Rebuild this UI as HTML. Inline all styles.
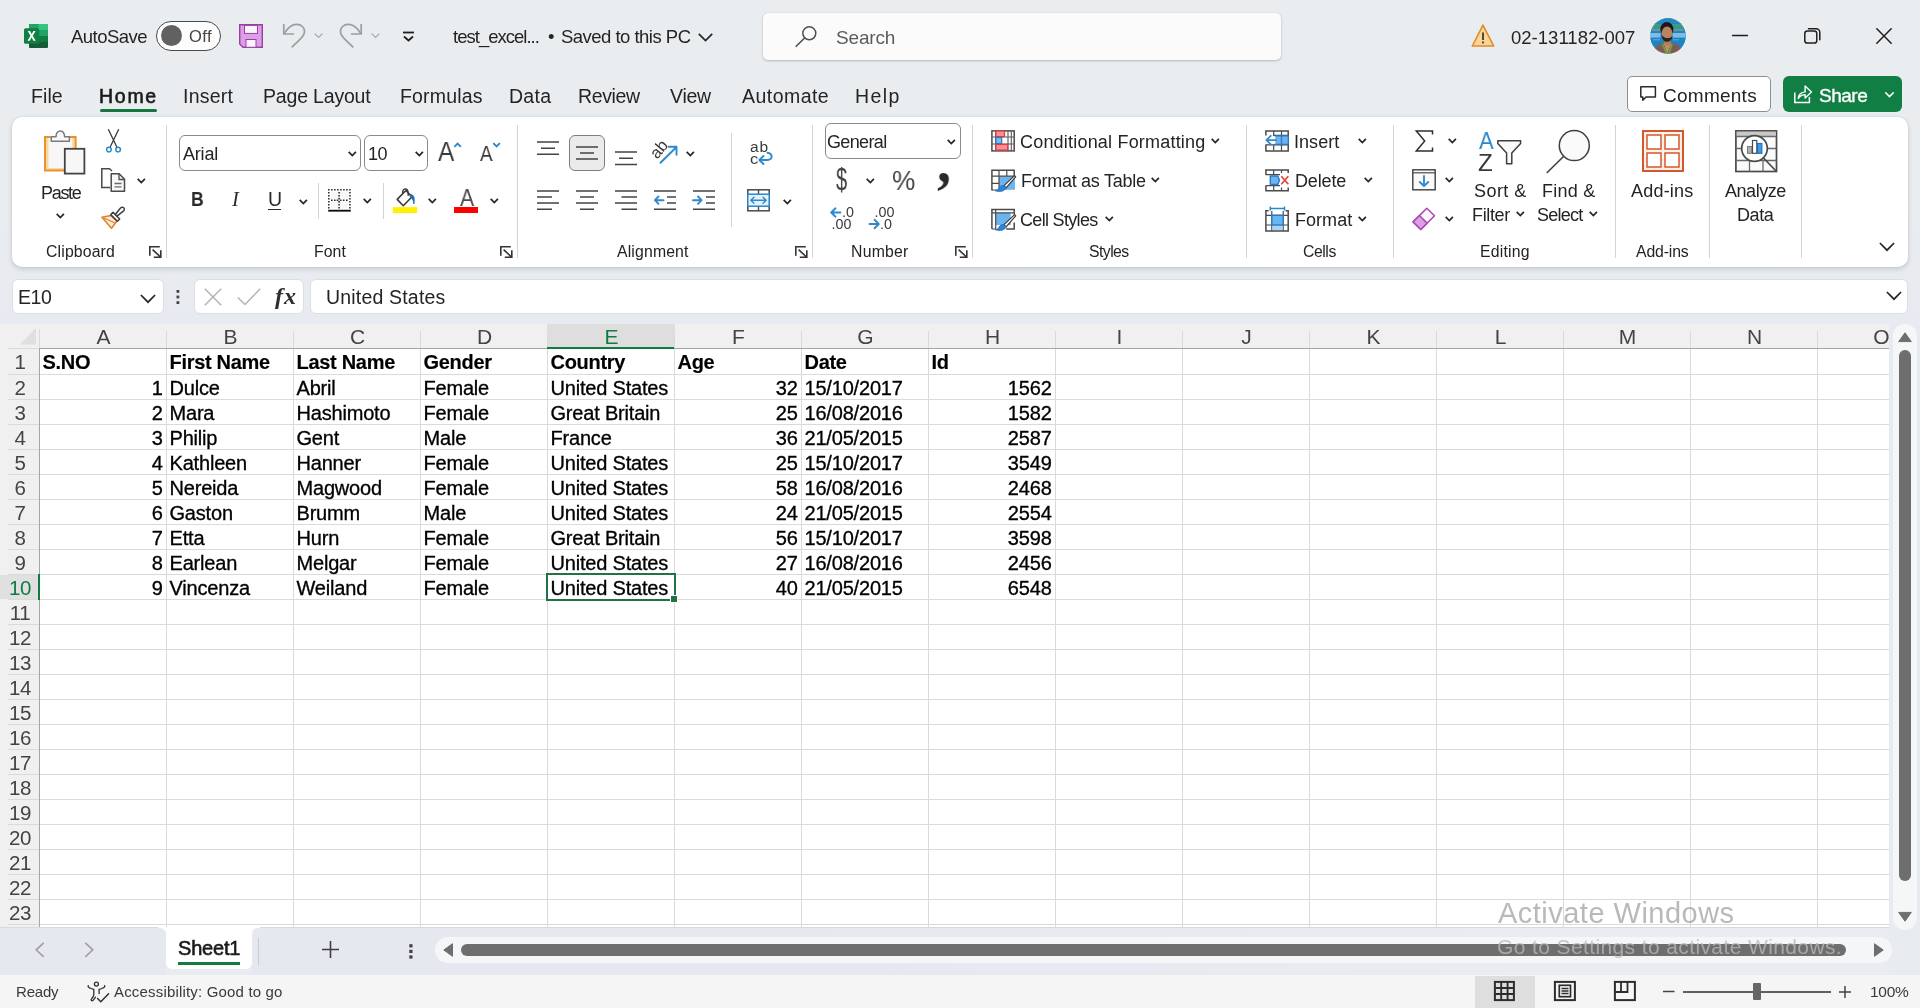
<!DOCTYPE html>
<html lang="en">
<head>
<meta charset="utf-8">
<title>test_excel - Excel</title>
<style>
*{box-sizing:border-box;margin:0;padding:0}
html,body{width:1920px;height:1008px;overflow:hidden;background:#e9edf0}
body{background:linear-gradient(to bottom,#e9edf0 0,#e9edf0 200px,#e7eaf0 330px,#e7eaf0 900px,#e9ecf0 100%)}
body{font-family:"Liberation Sans",sans-serif;color:#242424;position:relative}
.t{position:absolute;white-space:pre;line-height:1;will-change:transform}
.t.c,.t.k{will-change:auto}
.abs{position:absolute}
svg{position:absolute;overflow:visible}
.sep{position:absolute;width:1px;background:#d4d4d4}
.chev{fill:none;stroke:#262626;stroke-width:1.75;stroke-linecap:butt;stroke-linejoin:miter}
.dl{fill:none;stroke:#333;stroke-width:1.6}
.ln{stroke:#444;stroke-width:1.5;fill:none}
.bl{stroke:#2e8aca;stroke-width:1.9;fill:none;stroke-linecap:round;stroke-linejoin:round}
.c{font-size:20px;letter-spacing:-.19px;color:#000;-webkit-text-stroke:.32px #000}
.semi2{-webkit-text-stroke:.35px currentColor}
.semi{-webkit-text-stroke:.6px currentColor}
</style>
</head>
<body>

<!-- ================= TITLE BAR ================= -->
<div id="titlebar" class="abs" style="left:0;top:0;width:1920px;height:72px">
<!-- Excel logo -->
<svg style="left:24px;top:24px" width="24" height="24" viewBox="0 0 24 24">
  <rect x="5" y="0" width="19" height="24" rx="1.6" fill="#21a366"/>
  <rect x="5" y="0" width="9.5" height="6" fill="#21a366"/>
  <rect x="14.5" y="0" width="9.5" height="6" rx="1" fill="#33c481"/>
  <rect x="5" y="6" width="9.5" height="6" fill="#107c41"/>
  <rect x="14.5" y="6" width="9.5" height="6" fill="#21a366"/>
  <rect x="5" y="12" width="9.5" height="6" fill="#0e6a37"/>
  <rect x="14.5" y="12" width="9.5" height="6" fill="#107c41"/>
  <path d="M5 18h19v4.4a1.6 1.6 0 0 1-1.6 1.6H6.6A1.6 1.6 0 0 1 5 22.400z" fill="#185c37"/>
  <rect x="0" y="4.300" width="15.200" height="15.500" rx="1.600" fill="#117e43"/>
  <path d="M3.700 7h2.400l1.600 3.300L9.400 7h2.200l-2.800 4.800 2.900 4.900H9.300l-1.700-3.500-1.800 3.500H3.500l3-4.900z" fill="#fff"/>
</svg>
<span class="t" style="left:71.20px;top:28px;font-size:18.5px;letter-spacing:-0.543px">AutoSave</span>
<!-- toggle -->
<div class="abs" style="left:156px;top:21px;width:65px;height:30px;border:1.3px solid #4a4a4a;border-radius:15px;background:#fdfdfd"></div>
<div class="abs" style="left:161px;top:25px;width:21px;height:21px;border-radius:50%;background:#616161"></div>
<span class="t" style="left:188.60px;top:28px;font-size:16.5px;letter-spacing:0.400px;color:#444">Off</span>
<!-- save -->
<svg style="left:239px;top:24px" width="24" height="24" viewBox="0 0 24 24">
  <path d="M.7.7h22.600v22.600H4L.7 20z" fill="#dc9fe3" stroke="#9b3ea6" stroke-width="1.400"/>
  <rect x="5.500" y="1.400" width="13" height="8" fill="#fbf3fc" stroke="#9b3ea6" stroke-width="1"/>
  <rect x="7" y="15.500" width="10" height="7.800" fill="#fbf3fc" stroke="#9b3ea6" stroke-width="1"/>
</svg>
<!-- undo -->
<svg style="left:282px;top:23px" width="24" height="26" viewBox="0 0 24 26">
  <path d="M1.800 1.100V11h10.200" fill="none" stroke="#9c9e9f" stroke-width="1.700"/>
  <path d="M2.200 10.600C5.500 5 10 1.400 14.700 1.400c4.800 0 7.800 3.200 7.800 7.200 0 3.400-2 5.400-4.500 7.700l-8.300 8" fill="none" stroke="#9c9e9f" stroke-width="1.700"/>
</svg>
<svg style="left:314px;top:33px" width="9" height="5" viewBox="0 0 9 5"><path d="M.6.600l3.900 3.800L8.400.600" fill="none" stroke="#a8a8a8" stroke-width="1.300"/></svg>
<!-- redo -->
<svg style="left:339px;top:23px" width="24" height="26" viewBox="0 0 24 26">
  <path d="M22.200 1.100V11H12" fill="none" stroke="#9c9e9f" stroke-width="1.700"/>
  <path d="M21.800 10.600C18.500 5 14 1.400 9.300 1.400c-4.800 0-7.800 3.200-7.800 7.200 0 3.400 2 5.400 4.500 7.700l8.300 8" fill="none" stroke="#9c9e9f" stroke-width="1.700"/>
</svg>
<svg style="left:371px;top:33px" width="9" height="5" viewBox="0 0 9 5"><path d="M.6.600l3.900 3.800L8.400.600" fill="none" stroke="#a8a8a8" stroke-width="1.300"/></svg>
<!-- customize QAT -->
<svg style="left:403px;top:31px" width="11" height="11" viewBox="0 0 11 11">
  <path d="M0 1.500h11" stroke="#1f1f1f" stroke-width="1.800"/>
  <path d="M1 5.500l4.500 4L10 5.500" fill="none" stroke="#1f1f1f" stroke-width="1.700"/>
</svg>
<span class="t" style="left:452.70px;top:28px;font-size:18.5px;letter-spacing:-0.983px">test_excel...</span>
<span class="t" style="left:548.20px;top:28px;font-size:18.5px">•</span>
<span class="t" style="left:561.40px;top:28px;font-size:18.5px;letter-spacing:-0.520px">Saved to this PC</span>
<svg style="left:698px;top:33px" width="15" height="9" viewBox="0 0 15 9"><path d="M.8.800l6.700 6.800L14.200.800" class="chev" style="stroke-width:1.700"/></svg>
<!-- search -->
<div class="abs" style="left:763px;top:12.500px;width:517.500px;height:47px;background:#fbfbfb;border-radius:5px;box-shadow:0 1px 2.500px rgba(0,0,0,.22),0 0 1px rgba(0,0,0,.12)"></div>
<svg style="left:795px;top:25px" width="23" height="23" viewBox="0 0 23 23">
  <circle cx="14.300" cy="8.300" r="6.500" fill="none" stroke="#4f4f4f" stroke-width="1.500"/>
  <path d="M9.600 13L1.200 21.300" stroke="#4f4f4f" stroke-width="1.600" stroke-linecap="round"/>
</svg>
<span class="t" style="left:836.40px;top:28px;font-size:19px;letter-spacing:-0.160px;color:#5c5c5c">Search</span>
<!-- warning -->
<svg style="left:1471px;top:23px" width="24" height="25" viewBox="0 0 24 25">
  <path d="M12 2.200L22.700 23H1.300z" fill="#fbd591" stroke="#e08a2c" stroke-width="1.600" stroke-linejoin="round"/>
  <path d="M12 9.500v7.500" stroke="#3a3a3a" stroke-width="1.800"/>
  <rect x="11.100" y="18.500" width="1.800" height="1.900" fill="#3a3a3a"/>
</svg>
<span class="t" style="left:1510.90px;top:29px;font-size:18.5px;letter-spacing:0.017px">02-131182-007</span>
<!-- avatar -->
<svg style="left:1650px;top:18px" width="36" height="36" viewBox="0 0 36 36">
  <defs><clipPath id="av"><circle cx="18" cy="18" r="17.900"/></clipPath><filter id="avb" x="-10%" y="-10%" width="120%" height="120%"><feGaussianBlur stdDeviation=".55"/></filter></defs>
  <g clip-path="url(#av)"><g filter="url(#avb)">
    <rect x="-2" y="-2" width="40" height="40" fill="#1f84c3"/>
    <rect x="-2" y="-2" width="40" height="7" fill="#2588c0"/>
    <rect x="1" y="5.800" width="10" height="4" fill="#3a9c84"/>
    <rect x="22" y="5.800" width="12" height="4" fill="#3a9c84"/>
    <rect x="2" y="10.500" width="9" height="2.600" fill="#9fb45a" opacity=".5"/>
    <rect x="22.500" y="10.500" width="11" height="2.600" fill="#9fb45a" opacity=".5"/>
    <rect x="0" y="15" width="10.500" height="4.600" fill="#8fc6e6" opacity=".85"/>
    <rect x="22.500" y="15" width="13" height="4.600" fill="#8fc6e6" opacity=".85"/>
    <rect x="3" y="21.300" width="7" height="1" fill="#8fc6e6" opacity=".6"/>
    <rect x="23" y="21.300" width="6" height="1" fill="#8fc6e6" opacity=".6"/>
    <path d="M3.500 37c0-7 3.500-10.800 9.500-12l3.500-.8h3.500l4.500 1.300c5 1.500 8 5 8.500 11.500z" fill="#7d5b58"/>
    <path d="M13.500 24.800l3.800 10.500 4.200-10z" fill="#c48e62"/>
    <path d="M12.300 26l4.600 10M22.100 26l-3.300 10" stroke="#6aa540" stroke-width="1.700" fill="none"/>
    <path d="M14.800 20h5.800v6.200l-2.900 1.600-2.900-1.600z" fill="#b27d58"/>
    <ellipse cx="16.900" cy="11.200" rx="6.500" ry="7.100" fill="#20181a"/>
    <ellipse cx="17" cy="15.300" rx="5.300" ry="6.800" fill="#b8835f"/>
    <path d="M11.500 16.500c.3 4.600 2.400 7.300 5.500 7.300 3.200 0 5.200-2.300 5.500-6-1.100 1.700-2.600 2.300-4.800 2.300-2.600 0-4.600-1-6.200-3.600z" fill="#33221c"/>
  </g></g>
</svg>
<!-- window controls -->
<svg style="left:1732px;top:34px" width="16" height="3" viewBox="0 0 16 3"><path d="M.5 1.500h15" stroke="#1f1f1f" stroke-width="1.500" stroke-linecap="round"/></svg>
<svg style="left:1804px;top:27px" width="17" height="17" viewBox="0 0 17 17">
  <rect x=".8" y="4" width="12" height="12" rx="2.600" fill="none" stroke="#1f1f1f" stroke-width="1.500"/>
  <path d="M4.500 1.700h7.700a3.600 3.600 0 0 1 3.600 3.600v7.500" fill="none" stroke="#1f1f1f" stroke-width="1.500" stroke-linecap="round"/>
</svg>
<svg style="left:1876px;top:28px" width="16" height="16" viewBox="0 0 16 16"><path d="M.8.800l14.400 14.400M15.200.800L.8 15.200" stroke="#1f1f1f" stroke-width="1.500" stroke-linecap="round"/></svg>
</div>

<!-- ================= TABS ================= -->
<span class="t" style="left:31.20px;top:87px;font-size:19.5px;letter-spacing:0.067px">File</span>
<span class="t semi" style="left:98.70px;top:87px;font-size:19.5px;letter-spacing:1.733px;color:#1a1a1a">Home</span>
<div class="abs" style="left:100px;top:108.800px;width:57px;height:3.100px;border-radius:1.600px;background:#15763f"></div>
<span class="t" style="left:183.20px;top:87px;font-size:19.5px;letter-spacing:0.240px">Insert</span>
<span class="t" style="left:262.90px;top:87px;font-size:19.5px;letter-spacing:-0.180px">Page Layout</span>
<span class="t" style="left:400.20px;top:87px;font-size:19.5px;letter-spacing:0.171px">Formulas</span>
<span class="t" style="left:509.10px;top:87px;font-size:19.5px;letter-spacing:0.267px">Data</span>
<span class="t" style="left:577.90px;top:87px;font-size:19.5px;letter-spacing:-0.360px">Review</span>
<span class="t" style="left:670.40px;top:87px;font-size:19.5px;letter-spacing:-0.267px">View</span>
<span class="t" style="left:741.90px;top:87px;font-size:19.5px;letter-spacing:0.457px">Automate</span>
<span class="t" style="left:855.40px;top:87px;font-size:19.5px;letter-spacing:1.400px">Help</span>
<!-- comments / share -->
<div class="abs" style="left:1627px;top:76px;width:144px;height:36px;background:#fff;border:1px solid #8e8e8e;border-radius:5px"></div>
<svg style="left:1640px;top:86px" width="17" height="16" viewBox="0 0 17 16"><path d="M.8.800h14.600v10.200H6L2.800 14.200V11H.8z" fill="none" stroke="#2a2a2a" stroke-width="1.500" stroke-linejoin="round"/></svg>
<span class="t" style="left:1663.20px;top:86px;font-size:19px;letter-spacing:0.257px">Comments</span>
<div class="abs" style="left:1783px;top:76px;width:119px;height:36px;background:#117f44;border-radius:6px"></div>
<svg style="left:1794.300px;top:85px" width="18" height="18" viewBox="0 0 18 18">
  <path d="M.8 7.600v9.800h14.600V12" fill="none" stroke="#fff" stroke-width="1.500"/>
  <path d="M4.300 13.500c.4-4 2.700-6.300 6.800-6.600V.900l6.300 6-6.300 6V9.600c-3 0-5 1-6.800 3.900z" fill="none" stroke="#fff" stroke-width="1.400" stroke-linejoin="round"/>
</svg>
<span class="t semi2" style="left:1818.90px;top:86px;font-size:19px;letter-spacing:-0.500px;color:#fff">Share</span>
<svg style="left:1885px;top:92px" width="9" height="6" viewBox="0 0 9 6"><path d="M.7.800l3.800 3.800L8.300.800" fill="none" stroke="#fff" stroke-width="1.600" stroke-linecap="round"/></svg>

<!-- ================= RIBBON ================= -->
<div class="abs" style="left:12px;top:117px;width:1896px;height:149.500px;background:#fff;border-radius:10px;box-shadow:0 2px 5px rgba(0,0,0,.15),0 0 2px rgba(0,0,0,.10)"></div>
<!-- group separators -->
<div class="sep" style="left:166px;top:124.500px;height:133px"></div>
<div class="sep" style="left:517px;top:124.500px;height:133px"></div>
<div class="sep" style="left:812px;top:124.500px;height:133px"></div>
<div class="sep" style="left:972px;top:124.500px;height:133px"></div>
<div class="sep" style="left:1246px;top:124.500px;height:133px"></div>
<div class="sep" style="left:1393px;top:124.500px;height:133px"></div>
<div class="sep" style="left:1615px;top:124.500px;height:133px"></div>
<div class="sep" style="left:1709px;top:124.500px;height:133px"></div>
<div class="sep" style="left:1801px;top:124.500px;height:133px"></div>

<!-- ---- Clipboard ---- -->
<svg style="left:44px;top:130px" width="42" height="45" viewBox="0 0 42 45">
  <path d="M1 7h30.600v12H22v21.600H1z" fill="#f7f7f7"/>
  <path d="M3.300 8v31.200h17.500M29.400 8v10" fill="none" stroke="#fbd79f" stroke-width="2.400"/>
  <path d="M6.500 7H1v33.600h20M25.500 7h6.100v11.500" fill="none" stroke="#e8912d" stroke-width="2"/>
  <path d="M7.200 11.300V6.800h4.700c.4-3.600 2.300-5.700 4.400-5.700s4 2.100 4.400 5.700h4.700v4.500z" fill="#f8f8f8" stroke="#7a7a7a" stroke-width="1.500" stroke-linejoin="round"/>
  <rect x="20.800" y="18.800" width="19.600" height="24.800" fill="#f7f7f7" stroke="#444" stroke-width="1.800"/>
</svg>
<span class="t" style="left:40.60px;top:184px;font-size:18px;letter-spacing:-1.300px">Paste</span>
<svg style="left:56px;top:213px" width="10" height="6" viewBox="0 0 10 6"><path d="M.700.900l3.600 3.600 3.600-3.600" class="chev"/></svg>
<!-- cut -->
<svg style="left:105px;top:129px" width="17" height="25" viewBox="0 0 17 25">
  <path d="M3.300.300L11.800 18M13.700.300L5.200 18" stroke="#3a3a3a" stroke-width="1.300" fill="none"/>
  <circle cx="3.900" cy="20.600" r="2.300" fill="#fff" stroke="#2b88c8" stroke-width="1.500"/>
  <circle cx="13.100" cy="20.600" r="2.300" fill="#fff" stroke="#2b88c8" stroke-width="1.500"/>
</svg>
<!-- copy -->
<svg style="left:101px;top:168px" width="25" height="24" viewBox="0 0 25 24">
  <path d="M9 19.500H.8V.800h7.700L11 3" fill="none" stroke="#4a4a4a" stroke-width="1.500"/>
  <path d="M10.200 5.800h8l5.300 5.400v12H10.200z" fill="#f7f7f7" stroke="#4a4a4a" stroke-width="1.500" stroke-linejoin="round"/>
  <path d="M18 6v5.500h5.300" fill="none" stroke="#4a4a4a" stroke-width="1.300"/>
  <path d="M13.500 15.500h7M13.500 18.800h7" stroke="#6a6a6a" stroke-width="1.300"/>
</svg>
<svg style="left:137px;top:178px" width="10" height="6" viewBox="0 0 10 6"><path d="M.700.900l3.600 3.600 3.600-3.600" class="chev"/></svg>
<!-- format painter -->
<svg style="left:101px;top:206px" width="25" height="24" viewBox="0 0 25 24">
  <path d="M10 9.500l5.800 5.800-5.300 7L.9 11.200z" fill="#fdebd3" stroke="#e0822a" stroke-width="1.500" stroke-linejoin="round"/>
  <path d="M3 12l11 5" stroke="#e0822a" stroke-width="1.300"/>
  <path d="M9.700 8.600l2.300-2.300 6.700 6.700-2.300 2.300z" fill="#fff" stroke="#3f3f3f" stroke-width="1.500" stroke-linejoin="round"/>
  <path d="M14.300 8.500l5-6.300c1-1.200 2.500-1.300 3.400-.4.900.9.800 2.400-.4 3.400l-6.300 5z" fill="#fff" stroke="#3f3f3f" stroke-width="1.500" stroke-linejoin="round"/>
</svg>
<span class="t" style="left:45.70px;top:244px;font-size:15.8px;letter-spacing:0.150px">Clipboard</span>
<svg style="left:149px;top:246px" width="13" height="12" viewBox="0 0 13 12"><path d="M.8 9.800V.8h10M3.600 3.600l7.900 7.400M4.800 11.200h7V4.300" class="dl"/></svg>

<!-- ---- Font ---- -->
<div class="abs" style="left:179px;top:135px;width:181.500px;height:36px;border:1px solid #8a8a8a;border-radius:6px;background:#fff"></div>
<span class="t" style="left:182.90px;top:145px;font-size:18px;letter-spacing:-0.200px">Arial</span>
<svg style="left:348px;top:151px" width="10" height="6" viewBox="0 0 10 6"><path d="M.700.900l3.600 3.600 3.600-3.600" class="chev"/></svg>
<div class="abs" style="left:364px;top:135px;width:63.800px;height:36px;border:1px solid #8a8a8a;border-radius:6px;background:#fff"></div>
<span class="t" style="left:367.80px;top:145px;font-size:18px;letter-spacing:-0.400px">10</span>
<svg style="left:415px;top:151px" width="10" height="6" viewBox="0 0 10 6"><path d="M.700.900l3.600 3.600 3.600-3.600" class="chev"/></svg>
<!-- grow / shrink -->
<span class="t" style="left:438.40px;top:137px;font-size:28.3px;transform:scaleX(0.863);transform-origin:0 0;color:#3a3a3a">A</span>
<svg style="left:453px;top:142px" width="9" height="6" viewBox="0 0 9 6"><path d="M1.300 4.900l3.300-3.300 3.300 3.300" class="bl" style="stroke-width:1.900;stroke-linecap:butt;stroke-linejoin:miter"/></svg>
<span class="t" style="left:480.00px;top:143px;font-size:22.3px;transform:scaleX(0.840);transform-origin:0 0;color:#3a3a3a">A</span>
<svg style="left:492px;top:142px" width="9" height="6" viewBox="0 0 9 6"><path d="M1.300 1.100l3.300 3.300 3.300-3.300" class="bl" style="stroke-width:1.900;stroke-linecap:butt;stroke-linejoin:miter"/></svg>
<!-- B I U -->
<span class="t" style="left:191.00px;top:190px;font-size:19.5px;transform:scaleX(0.900);transform-origin:0 0;color:#2a2a2a;font-weight:700">B</span>
<span class="t" style="left:231.90px;top:189px;font-size:20.5px;color:#2a2a2a;font-style:italic;font-family:'Liberation Serif'">I</span>
<span class="t" style="left:267.53px;top:190px;font-size:19.5px;transform:scaleX(0.967);transform-origin:0 0;color:#2a2a2a">U</span>
<div class="abs" style="left:267.500px;top:208.500px;width:13.500px;height:1.500px;background:#2a2a2a"></div>
<svg style="left:298.800px;top:198.500px" width="10" height="6" viewBox="0 0 10 6"><path d="M.700.900l3.600 3.600 3.600-3.600" class="chev"/></svg>
<div class="sep" style="left:318px;top:183px;height:35.500px"></div>
<!-- borders -->
<svg style="left:328px;top:189px" width="23" height="23" viewBox="0 0 23 23">
  <rect x="3" y="3" width="17" height="16" fill="#f8f8f8"/>
  <g fill="#2a2a2a"><rect x="0.00" y="0.00" width="1.6" height="1.6" rx=".3"/><rect x="3.02" y="0.00" width="1.6" height="1.6" rx=".3"/><rect x="6.04" y="0.00" width="1.6" height="1.6" rx=".3"/><rect x="9.06" y="0.00" width="1.6" height="1.6" rx=".3"/><rect x="12.08" y="0.00" width="1.6" height="1.6" rx=".3"/><rect x="15.10" y="0.00" width="1.6" height="1.6" rx=".3"/><rect x="18.12" y="0.00" width="1.6" height="1.6" rx=".3"/><rect x="21.14" y="0.00" width="1.6" height="1.6" rx=".3"/><rect x="0.00" y="3.00" width="1.6" height="1.6" rx=".3"/><rect x="21.14" y="3.00" width="1.6" height="1.6" rx=".3"/><rect x="0.00" y="6.00" width="1.6" height="1.6" rx=".3"/><rect x="21.14" y="6.00" width="1.6" height="1.6" rx=".3"/><rect x="0.00" y="9.00" width="1.6" height="1.6" rx=".3"/><rect x="21.14" y="9.00" width="1.6" height="1.6" rx=".3"/><rect x="0.00" y="12.00" width="1.6" height="1.6" rx=".3"/><rect x="21.14" y="12.00" width="1.6" height="1.6" rx=".3"/><rect x="0.00" y="15.00" width="1.6" height="1.6" rx=".3"/><rect x="21.14" y="15.00" width="1.6" height="1.6" rx=".3"/><rect x="0.00" y="18.00" width="1.6" height="1.6" rx=".3"/><rect x="21.14" y="18.00" width="1.6" height="1.6" rx=".3"/><rect x="10.30" y="3.00" width="1.6" height="1.6" rx=".3"/><rect x="10.30" y="6.00" width="1.6" height="1.6" rx=".3"/><rect x="10.30" y="15.00" width="1.6" height="1.6" rx=".3"/><rect x="10.30" y="18.00" width="1.6" height="1.6" rx=".3"/><rect x="10.30" y="8.80" width="1.6" height="1.6" rx=".3"/><rect x="10.30" y="12.10" width="1.6" height="1.6" rx=".3"/><rect x="3.00" y="10.45" width="1.6" height="1.6" rx=".3"/><rect x="6.00" y="10.45" width="1.6" height="1.6" rx=".3"/><rect x="14.90" y="10.45" width="1.6" height="1.6" rx=".3"/><rect x="18.00" y="10.45" width="1.6" height="1.6" rx=".3"/><rect x="8.70" y="10.45" width="1.6" height="1.6" rx=".3"/><rect x="11.90" y="10.45" width="1.6" height="1.6" rx=".3"/></g>
  <path d="M.2 21.700h22.600" stroke="#111" stroke-width="1.900"/>
</svg>
<svg style="left:363px;top:198px" width="10" height="6" viewBox="0 0 10 6"><path d="M.700.900l3.600 3.600 3.600-3.600" class="chev"/></svg>
<div class="sep" style="left:383px;top:183px;height:35.500px"></div>
<!-- fill color -->
<svg style="left:392px;top:188px" width="26" height="26" viewBox="0 0 26 26">
  <path d="M5.200 11.400l6.400-6.700 2.600-2 5.800 6-8.700 9z" fill="#fff" stroke="#3a3a3a" stroke-width="1.600" stroke-linejoin="round"/>
  <path d="M10.800 5.600C10.300 2.800 11.300 1 13.200 1c1.900 0 2.900 1.500 3 4.500v1.700" fill="none" stroke="#3a3a3a" stroke-width="1.500" stroke-linecap="round"/>
  <path d="M18.300 6.300c3.400.3 4.800 3.500 3.600 9.700-.3-3.200-1.200-5.300-3.900-7.300z" fill="#1f6fb5" stroke="#1f6fb5" stroke-width=".8" stroke-linejoin="round"/>
  <rect x=".8" y="19.100" width="24.400" height="5.900" fill="#fff200"/>
</svg>
<svg style="left:428px;top:198px" width="10" height="6" viewBox="0 0 10 6"><path d="M.700.900l3.600 3.600 3.600-3.600" class="chev"/></svg>
<!-- font color -->
<span class="t" style="left:459.60px;top:187px;font-size:23.3px;transform:scaleX(0.907);transform-origin:0 0;color:#4a4a4a">A</span>
<div class="abs" style="left:454px;top:207.100px;width:24px;height:5.900px;background:#fe0000"></div>
<svg style="left:489.500px;top:198px" width="10" height="6" viewBox="0 0 10 6"><path d="M.700.900l3.600 3.600 3.600-3.600" class="chev"/></svg>
<span class="t" style="left:313.70px;top:244px;font-size:15.8px;letter-spacing:0.067px">Font</span>
<svg style="left:500px;top:246px" width="13" height="12" viewBox="0 0 13 12"><path d="M.8 9.800V.8h10M3.600 3.600l7.900 7.400M4.800 11.200h7V4.300" class="dl"/></svg>

<!-- ---- Alignment ---- -->
<!-- top align -->
<svg style="left:537px;top:141px" width="22" height="14" viewBox="0 0 22 14"><path d="M0 1h22M4 7.200h14M0 13.300h22" class="ln"/></svg>
<!-- middle align (selected) -->
<div class="abs" style="left:569px;top:135px;width:36px;height:36px;background:#ebebeb;border:1px solid #7d7d7d;border-radius:6px"></div>
<svg style="left:576px;top:145.500px" width="22" height="14" viewBox="0 0 22 14"><path d="M0 1h22M4 7h14M0 13h22" class="ln"/></svg>
<!-- bottom align -->
<svg style="left:615px;top:150.500px" width="22" height="14" viewBox="0 0 22 14"><path d="M0 1h22M4 7.200h14M0 13.500h22" class="ln"/></svg>
<!-- orientation -->
<svg style="left:651px;top:139px" width="28" height="26" viewBox="0 0 28 26">
  <text x="0" y="0" transform="translate(6.200 20.800) rotate(-50)" font-family="Liberation Sans" font-size="16.500" fill="#3a3a3a">ab</text>
  <path d="M9.500 23.800L25 8.500M17.500 7.700h8v8" class="bl"/>
</svg>
<svg style="left:685.500px;top:151px" width="10" height="6" viewBox="0 0 10 6"><path d="M.700.900l3.600 3.600 3.600-3.600" class="chev"/></svg>
<!-- row 2 -->
<svg style="left:537px;top:190px" width="22" height="20" viewBox="0 0 22 20"><path d="M0 1h22M0 7h15M0 13h22M0 19.200h15" class="ln"/></svg>
<svg style="left:576px;top:190px" width="22" height="20" viewBox="0 0 22 20"><path d="M0 1h22M4 7h14M0 13h22M4 19.200h14" class="ln"/></svg>
<svg style="left:615px;top:190px" width="22" height="20" viewBox="0 0 22 20"><path d="M0 1h22M6.500 7H22M0 13h22M6.500 19.200H22" class="ln"/></svg>
<!-- decrease indent -->
<svg style="left:654px;top:190px" width="22" height="20" viewBox="0 0 22 20">
  <path d="M0 1h22M13 7h9M13 13h9M0 19.200h22" class="ln"/>
  <path d="M9.500 10.200H1M4.500 6.500L.9 10.200l3.600 3.700" class="bl"/>
</svg>
<!-- increase indent -->
<svg style="left:693px;top:190px" width="22" height="20" viewBox="0 0 22 20">
  <path d="M0 1h22M13 7h9M13 13h9M0 19.200h22" class="ln"/>
  <path d="M0 10.200h8.500M5 6.500l3.600 3.700L5 13.900" class="bl"/>
</svg>
<div class="sep" style="left:731px;top:133px;height:93.500px"></div>
<!-- wrap text -->
<span class="t" style="left:750.00px;top:139px;font-size:15.5px;letter-spacing:1.000px;color:#3a3a3a">ab</span>
<span class="t" style="left:750.23px;top:151px;font-size:15.5px;transform:scaleX(1.067);transform-origin:0 0;color:#3a3a3a">c</span>
<svg style="left:758px;top:152px" width="15" height="13" viewBox="0 0 15 13">
  <path d="M9.500.800c3.500.6 4.700 2.800 4 4.700-.7 1.900-3 2.700-5.500 2.500H1.500M5.500 4L1.300 8l4.200 4" class="bl"/>
</svg>
<!-- merge & center -->
<svg style="left:747px;top:189px" width="23" height="23" viewBox="0 0 23 23">
  <rect x=".8" y=".8" width="21.400" height="21" fill="#fff" stroke="#4a4a4a" stroke-width="1.500"/>
  <path d="M11.500 1v4.500M11.500 17v4.500" stroke="#4a4a4a" stroke-width="1.400"/>
  <rect x=".8" y="5.200" width="21.400" height="12" fill="#e6f2fb" stroke="#2b88c8" stroke-width="1.500"/>
  <path d="M4 11.200h15M7 8.200l-3.200 3 3.200 3M16 8.200l3.200 3-3.200 3" class="bl" style="stroke-width:1.400"/>
</svg>
<svg style="left:783px;top:198.500px" width="10" height="6" viewBox="0 0 10 6"><path d="M.700.900l3.600 3.600 3.600-3.600" class="chev"/></svg>
<span class="t" style="left:617.40px;top:244px;font-size:15.8px;letter-spacing:0.150px">Alignment</span>
<svg style="left:795px;top:246px" width="13" height="12" viewBox="0 0 13 12"><path d="M.8 9.800V.8h10M3.600 3.600l7.900 7.400M4.800 11.200h7V4.300" class="dl"/></svg>

<!-- ---- Number ---- -->
<div class="abs" style="left:825px;top:123px;width:135.500px;height:36px;border:1px solid #8a8a8a;border-radius:6px;background:#fff"></div>
<span class="t" style="left:827.40px;top:133px;font-size:18px;letter-spacing:-0.633px">General</span>
<svg style="left:947px;top:139px" width="10" height="6" viewBox="0 0 10 6"><path d="M.700.900l3.600 3.600 3.600-3.600" class="chev"/></svg>
<span class="t" style="left:836.05px;top:164px;font-size:31px;transform:scaleX(0.650);transform-origin:0 0;color:#444">$</span>
<svg style="left:866px;top:178px" width="10" height="6" viewBox="0 0 10 6"><path d="M.700.900l3.600 3.600 3.600-3.600" class="chev"/></svg>
<span class="t" style="left:891.85px;top:167px;font-size:27.5px;transform:scaleX(0.952);transform-origin:0 0;color:#444">%</span>
<span class="t" style="left:937.27px;top:132px;font-size:60px;transform:scaleX(0.933);transform-origin:0 0;color:#2a2a2a;font-weight:700;font-family:'Liberation Serif'">,</span>
<!-- decrease decimal -->
<svg style="left:830px;top:207px" width="26" height="23" viewBox="0 0 26 23">
  <path d="M10.500 5.500H1.500M5.500 1.300L1.200 5.500l4.300 4.200" class="bl"/>
  <text x="12" y="10.200" font-family="Liberation Sans" font-size="14.300" fill="#3a3a3a">.0</text>
  <text x="1.500" y="22" font-family="Liberation Sans" font-size="14.300" fill="#3a3a3a">.00</text>
</svg>
<!-- increase decimal -->
<svg style="left:868px;top:207px" width="26" height="23" viewBox="0 0 26 23">
  <text x="6.500" y="10.200" font-family="Liberation Sans" font-size="14.300" fill="#3a3a3a">.00</text>
  <path d="M1.500 17h9M6.500 12.800l4.300 4.200-4.300 4.200" class="bl"/>
  <text x="12" y="22" font-family="Liberation Sans" font-size="14.300" fill="#3a3a3a">.0</text>
</svg>
<span class="t" style="left:850.90px;top:244px;font-size:15.8px;letter-spacing:0.240px">Number</span>
<svg style="left:955px;top:246px" width="13" height="12" viewBox="0 0 13 12"><path d="M.8 9.800V.8h10M3.600 3.600l7.900 7.400M4.800 11.200h7V4.300" class="dl"/></svg>

<!-- ---- Styles ---- -->
<!-- conditional formatting -->
<svg style="left:991px;top:130px" width="24" height="22" viewBox="0 0 24 22">
  <rect x=".9" y=".9" width="22.300" height="20" fill="#fff" stroke="#4a4a4a" stroke-width="1.500"/>
  <path d="M4.600 1v20M17 1v20M20.300 1v20M1 7h22M1 14h22" stroke="#5a5a5a" stroke-width="1.100" fill="none"/>
  <rect x="4.900" y="1" width="8.600" height="5.600" fill="#ff8f98" stroke="#e23b3b" stroke-width="1.200"/>
  <rect x="4.900" y="7.500" width="5.800" height="6" fill="#7abdf0" stroke="#2b78c8" stroke-width="1.200"/>
  <rect x="4.900" y="14.400" width="11.800" height="5.700" fill="#ff8f98" stroke="#e23b3b" stroke-width="1.200"/>
</svg>
<span class="t" style="left:1020.20px;top:133px;font-size:18px;letter-spacing:0.200px">Conditional Formatting</span>
<svg style="left:1210.500px;top:138px" width="10" height="6" viewBox="0 0 10 6"><path d="M.700.900l3.600 3.600 3.600-3.600" class="chev"/></svg>
<!-- format as table -->
<svg style="left:991px;top:169px" width="25" height="24" viewBox="0 0 25 24">
  <rect x="8" y="7.200" width="15.900" height="13.600" fill="#6cb4ee"/>
  <path d="M.9 21.600V1.300h22.300v5.500" fill="none" stroke="#4a4a4a" stroke-width="1.500"/>
  <path d="M1 7.200h22M1 14.400h7M8 1.500v19.500M15.800 1.500v5.700M1 21h6" stroke="#4a4a4a" stroke-width="1.200" fill="none"/>
  <path d="M23.600 6.600l1.100 1.300-9.600 10.900-2.300-1.900z" fill="#fff" stroke="#3a3a3a" stroke-width="1.200" stroke-linejoin="round"/>
  <path d="M12.700 16.700c-2.600-.3-4 .9-4.600 2.400-.6 1.500-1.800 2.300-3.900 2.600 4.500 1.500 9.800.600 11-3z" fill="#2f84d4" stroke="#1f6fbf" stroke-width=".9" stroke-linejoin="round"/>
</svg>
<span class="t" style="left:1020.90px;top:172px;font-size:18px;letter-spacing:-0.271px">Format as Table</span>
<svg style="left:1150.500px;top:177px" width="10" height="6" viewBox="0 0 10 6"><path d="M.700.900l3.600 3.600 3.600-3.600" class="chev"/></svg>
<!-- cell styles -->
<svg style="left:991px;top:208px" width="25" height="24" viewBox="0 0 25 24">
  <rect x="4.700" y="4.900" width="15" height="12.200" fill="#6cb4ee"/>
  <path d="M.9 21V1.400h22.300v5M23.200 14.500V21h-8" fill="none" stroke="#4a4a4a" stroke-width="1.500"/>
  <path d="M1 4.900h22M4.700 1.500v19.500M1 21h4" stroke="#4a4a4a" stroke-width="1.200" fill="none"/>
  <path d="M23.600 6.600l1.100 1.300-9.600 10.900-2.300-1.900z" fill="#fff" stroke="#3a3a3a" stroke-width="1.200" stroke-linejoin="round"/>
  <path d="M12.700 16.700c-2.600-.3-4 .9-4.600 2.400-.6 1.500-1.800 2.300-3.900 2.600 4.500 1.500 9.800.600 11-3z" fill="#2f84d4" stroke="#1f6fbf" stroke-width=".9" stroke-linejoin="round"/>
</svg>
<span class="t" style="left:1020.20px;top:211px;font-size:18px;letter-spacing:-0.680px">Cell Styles</span>
<svg style="left:1104.500px;top:216px" width="10" height="6" viewBox="0 0 10 6"><path d="M.700.900l3.600 3.600 3.600-3.600" class="chev"/></svg>
<span class="t" style="left:1088.90px;top:244px;font-size:15.8px;letter-spacing:-0.560px">Styles</span>

<!-- ---- Cells ---- -->
<!-- insert -->
<svg style="left:1265px;top:130px" width="24" height="22" viewBox="0 0 24 22">
  <path d="M.9 5.500V.9h22.300v20H.9V14.500" fill="#fff" stroke="#4a4a4a" stroke-width="1.500"/>
  <path d="M8.700 1v4.500M16.500 1v4.500M8.700 14.600v6M16.500 14.600v6M1 14.900h22M8 5.300h15" stroke="#4a4a4a" stroke-width="1.200" fill="none"/>
  <rect x="10.300" y="5.900" width="13" height="8.400" fill="#6cb4ee"/>
  <path d="M9.500 5.900h13.800M9.500 14.300h13.800M16.500 5.900v8.400M23.300 5.900v8.400" stroke="#2b78c8" stroke-width="1.300"/>
  <path d="M11 10.100H1.700M5.800 5.800L1.400 10.100l4.400 4.300" class="bl" style="stroke-width:1.800"/>
</svg>
<span class="t" style="left:1294.20px;top:133px;font-size:18px;letter-spacing:0.040px">Insert</span>
<svg style="left:1358px;top:138px" width="10" height="6" viewBox="0 0 10 6"><path d="M.700.900l3.600 3.600 3.600-3.600" class="chev"/></svg>
<!-- delete -->
<svg style="left:1265px;top:169px" width="24" height="23" viewBox="0 0 24 23">
  <path d="M.9 6V.9h22.300V4M.9 16.500v5.200h22.300V18.500" fill="none" stroke="#4a4a4a" stroke-width="1.500"/>
  <path d="M1 5.600h14M1 16.700h14M8.700 1v4.600M16.500 1v3M8.700 16.700v5M16.500 18.500v3" stroke="#4a4a4a" stroke-width="1.200" fill="none"/>
  <path d="M5.300 7h7.500l1.700 4.200-1.700 4.300H5.300z" fill="#6cb4ee" stroke="#2b78c8" stroke-width="1.400" stroke-linejoin="round"/>
  <path d="M16.300 7.300l7 8M23.300 7.300l-7 8" stroke="#e8403a" stroke-width="1.700"/>
</svg>
<span class="t" style="left:1295.20px;top:172px;font-size:18px;letter-spacing:-0.160px">Delete</span>
<svg style="left:1364px;top:177px" width="10" height="6" viewBox="0 0 10 6"><path d="M.700.900l3.600 3.600 3.600-3.600" class="chev"/></svg>
<!-- format -->
<svg style="left:1265px;top:206px" width="24" height="26" viewBox="0 0 24 26">
  <path d="M5.300 2.600h14.200M5.300.400v4.400M19.500.400v4.400" stroke="#2b88c8" stroke-width="1.500"/>
  <path d="M3.500 4.800H.9V25h22.300V4.800h-2.600" fill="#fff" stroke="#4a4a4a" stroke-width="1.500"/>
  <path d="M1 9.300h22M1 19h22M6.800 5v20M18.200 5v20" stroke="#4a4a4a" stroke-width="1.200" fill="none"/>
  <rect x="7.600" y="19" width="9.800" height="5" fill="#a9d3f5"/>
  <rect x="6.800" y="9.300" width="11.400" height="9.700" fill="#6cb4ee" stroke="#2b78c8" stroke-width="1.400"/>
</svg>
<span class="t" style="left:1295.20px;top:211px;font-size:18px;letter-spacing:0.040px">Format</span>
<svg style="left:1358px;top:216px" width="10" height="6" viewBox="0 0 10 6"><path d="M.700.900l3.600 3.600 3.600-3.600" class="chev"/></svg>
<span class="t" style="left:1302.90px;top:244px;font-size:15.8px;letter-spacing:-0.450px">Cells</span>

<!-- ---- Editing ---- -->
<svg style="left:1415px;top:130px" width="19" height="22" viewBox="0 0 19 22">
  <path d="M17.500 4.500V1H1.300l8.400 10-8.400 10h16.200v-3.500" fill="none" stroke="#2f2f2f" stroke-width="1.500" stroke-linejoin="miter"/>
</svg>
<svg style="left:1447.500px;top:138px" width="10" height="6" viewBox="0 0 10 6"><path d="M.700.900l3.600 3.600 3.600-3.600" class="chev"/></svg>
<!-- fill -->
<svg style="left:1412px;top:169px" width="24" height="22" viewBox="0 0 24 22">
  <rect x=".8" y=".8" width="22.400" height="20" fill="#fafafa" stroke="#4a4a4a" stroke-width="1.500"/>
  <path d="M1 3.800h22" stroke="#4a4a4a" stroke-width="1.200"/>
  <path d="M12 7v10M7.800 13l4.200 4.200 4.200-4.200" class="bl"/>
</svg>
<svg style="left:1444.500px;top:177px" width="10" height="6" viewBox="0 0 10 6"><path d="M.700.900l3.600 3.600 3.600-3.600" class="chev"/></svg>
<!-- clear -->
<svg style="left:1412px;top:207px" width="24" height="24" viewBox="0 0 24 24">
  <path d="M14.800 1.300l7.700 7.500L8.800 22.500 1.100 14.900z" fill="#fbf6fc" stroke="#a94bb5" stroke-width="1.600" stroke-linejoin="round"/>
  <path d="M7.400 8.500l7.700 7.600-6.300 6.400-7.700-7.600z" fill="#dc9fe3" stroke="#a94bb5" stroke-width="1.500" stroke-linejoin="round"/>
</svg>
<svg style="left:1444.500px;top:216px" width="10" height="6" viewBox="0 0 10 6"><path d="M.700.900l3.600 3.600 3.600-3.600" class="chev"/></svg>
<!-- sort & filter -->
<span class="t" style="left:1479.20px;top:129px;font-size:24px;transform:scaleX(0.912);transform-origin:0 0;color:#2b88c8">A</span>
<span class="t" style="left:1478.39px;top:151px;font-size:24px;transform:scaleX(1.008);transform-origin:0 0;color:#3a3a3a">Z</span>
<svg style="left:1497px;top:140px" width="25" height="25" viewBox="0 0 25 25">
  <path d="M.8.800h22.800v2.700L14.800 13v10.800H9.600V13L.8 3.500z" fill="#fafafa" stroke="#3f3f3f" stroke-width="1.500" stroke-linejoin="round"/>
</svg>
<span class="t" style="left:1473.50px;top:182px;font-size:18px;letter-spacing:0.440px">Sort &amp;</span>
<span class="t" style="left:1472.20px;top:206px;font-size:18px;letter-spacing:-0.360px">Filter</span>
<svg style="left:1516px;top:211px" width="10" height="6" viewBox="0 0 10 6"><path d="M.700.900l3.600 3.600 3.600-3.600" class="chev"/></svg>
<!-- find & select -->
<svg style="left:1546px;top:129px" width="45" height="45" viewBox="0 0 45 45">
  <circle cx="28.300" cy="16.600" r="15" fill="#fafafa" stroke="#3f3f3f" stroke-width="1.500"/>
  <path d="M17.500 27.500L1.200 43.500" stroke="#3f3f3f" stroke-width="1.600" stroke-linecap="round"/>
</svg>
<span class="t" style="left:1541.50px;top:182px;font-size:18px;letter-spacing:0.240px">Find &amp;</span>
<span class="t" style="left:1536.60px;top:206px;font-size:18px;letter-spacing:-0.760px">Select</span>
<svg style="left:1589px;top:211px" width="10" height="6" viewBox="0 0 10 6"><path d="M.700.900l3.600 3.600 3.600-3.600" class="chev"/></svg>
<span class="t" style="left:1479.60px;top:244px;font-size:15.8px;letter-spacing:0.200px">Editing</span>

<!-- ---- Add-ins ---- -->
<svg style="left:1642px;top:130px" width="42" height="42" viewBox="0 0 42 42">
  <rect x="1" y="1" width="40" height="40" fill="#fdf1ec" stroke="#d4582a" stroke-width="2"/>
  <rect x="5" y="5" width="14" height="14" fill="#fff" stroke="#d4582a" stroke-width="1.500"/>
  <rect x="23" y="5" width="14" height="14" fill="#fff" stroke="#d4582a" stroke-width="1.500"/>
  <rect x="5" y="23" width="14" height="14" fill="#fff" stroke="#d4582a" stroke-width="1.500"/>
  <rect x="23" y="23" width="14" height="14" fill="#fff" stroke="#d4582a" stroke-width="1.500"/>
</svg>
<span class="t" style="left:1631.30px;top:182px;font-size:18px;letter-spacing:0.200px">Add-ins</span>
<span class="t" style="left:1635.70px;top:244px;font-size:15.8px;letter-spacing:-0.133px">Add-ins</span>

<!-- ---- Analyze Data ---- -->
<svg style="left:1735px;top:130px" width="43" height="43" viewBox="0 0 43 43">
  <rect x=".9" y=".9" width="40.600" height="40.600" fill="#fafafa" stroke="#4a4a4a" stroke-width="1.700"/>
  <rect x="1.700" y="1.700" width="39" height="4.800" fill="#c8c8c8"/>
  <path d="M1 6.500h40.500M1 18.500h40.500M1 30.500h40.500M14.500 30.500v11M28 30.500v11" stroke="#6a6a6a" stroke-width="1.300" fill="none"/>
  <circle cx="19.500" cy="18.500" r="12.800" fill="#fff" stroke="#4a4a4a" stroke-width="1.700"/>
  <rect x="12.500" y="16.500" width="4.300" height="6.800" fill="#b0b0b0" stroke="#7a7a7a" stroke-width="1"/>
  <rect x="17.500" y="10.500" width="4.300" height="12.800" fill="#fff" stroke="#4a4a4a" stroke-width="1.200"/>
  <rect x="22.500" y="13.500" width="4.300" height="9.800" fill="#3d9be9" stroke="#1f6fbf" stroke-width="1.200"/>
  <path d="M28.500 28l13 13.500" stroke="#4a4a4a" stroke-width="1.800"/>
</svg>
<span class="t" style="left:1725.10px;top:182px;font-size:18px;letter-spacing:-0.467px">Analyze</span>
<span class="t" style="left:1736.50px;top:206px;font-size:18px;letter-spacing:-0.400px">Data</span>
<!-- collapse ribbon -->
<svg style="left:1879px;top:242px" width="16" height="10" viewBox="0 0 16 10"><path d="M.9 1l7.100 7.200L15.100 1" class="chev" style="stroke-width:1.700"/></svg>

<!-- ================= FORMULA BAR ================= -->
<div class="abs" style="left:12px;top:279px;width:152px;height:35px;background:#fff;border:1px solid #dbdee2;border-radius:6px"></div>
<span class="t" style="left:17.90px;top:288px;font-size:19.5px;letter-spacing:-0.400px">E10</span>
<svg style="left:140px;top:294px" width="16" height="10" viewBox="0 0 16 10"><path d="M.9 1l7.100 7.200L15.100 1" class="chev" style="stroke-width:1.700"/></svg>
<svg style="left:176px;top:289px" width="4" height="16" viewBox="0 0 4 16"><rect x=".5" y="1" width="2.800" height="2.800" fill="#444"/><rect x=".5" y="6.600" width="2.800" height="2.800" fill="#444"/><rect x=".5" y="12.200" width="2.800" height="2.800" fill="#444"/></svg>
<div class="abs" style="left:194px;top:279px;width:110px;height:35px;background:#fff;border:1px solid #dbdee2;border-radius:6px"></div>
<svg style="left:204px;top:288px" width="18" height="18" viewBox="0 0 18 18"><path d="M.8.800l16.400 16.400M17.200.800L.8 17.200" stroke="#b4b4b4" stroke-width="1.500" fill="none"/></svg>
<svg style="left:237px;top:288px" width="24" height="18" viewBox="0 0 24 18"><path d="M.8 9.500l7.200 7L23.200.800" stroke="#b4b4b4" stroke-width="1.500" fill="none"/></svg>
<span class="t" style="left:275.20px;top:284px;font-size:24px;letter-spacing:1.000px;color:#2f2f2f;font-weight:700;font-style:italic;font-family:'Liberation Serif'">fx</span>
<div class="abs" style="left:310px;top:279px;width:1598px;height:35px;background:#fff;border:1px solid #dbdee2;border-radius:6px"></div>
<span class="t" style="left:325.90px;top:288px;font-size:19.5px;letter-spacing:0.183px">United States</span>
<svg style="left:1886px;top:291px" width="16" height="10" viewBox="0 0 16 10"><path d="M.9 1l7.100 7.200L15.100 1" class="chev" style="stroke-width:1.700"/></svg>
<!-- ================= GRID ================= -->
<div id="grid" class="abs" style="left:0;top:324px;width:1889px;height:603px;background:#f0f0f0"></div>
<div class="abs" style="left:39px;top:349px;width:1850px;height:578px;background:#fff"></div>
<svg style="left:20px;top:328px" width="16" height="17" viewBox="0 0 16 17"><path d="M16 0v16.500H0z" fill="#dfdfdf"/></svg>
<div class="abs" style="left:547px;top:324px;width:128px;height:24px;background:#dedede"></div>
<div class="abs" style="left:0;top:575px;width:39px;height:24px;background:#e0e0e0"></div>
<svg style="left:0;top:0" width="1920" height="1008" viewBox="0 0 1920 1008" shape-rendering="crispEdges"><path d="M166.5 349V927M293.5 349V927M420.5 349V927M547.5 349V927M674.5 349V927M801.5 349V927M928.5 349V927M1055.5 349V927M1182.5 349V927M1309.5 349V927M1436.5 349V927M1563.5 349V927M1690.5 349V927M1817.5 349V927M40 374.5H1889M40 399.5H1889M40 424.5H1889M40 449.5H1889M40 474.5H1889M40 499.5H1889M40 524.5H1889M40 549.5H1889M40 574.5H1889M40 599.5H1889M40 624.5H1889M40 649.5H1889M40 674.5H1889M40 699.5H1889M40 724.5H1889M40 749.5H1889M40 774.5H1889M40 799.5H1889M40 824.5H1889M40 849.5H1889M40 874.5H1889M40 899.5H1889M40 924.5H1889" stroke="#dadada" stroke-width="1" fill="none"/><path d="M166.5 331V348M293.5 331V348M420.5 331V348M547.5 331V348M674.5 331V348M801.5 331V348M928.5 331V348M1055.5 331V348M1182.5 331V348M1309.5 331V348M1436.5 331V348M1563.5 331V348M1690.5 331V348M1817.5 331V348M8 374.5H39M8 399.5H39M8 424.5H39M8 449.5H39M8 474.5H39M8 499.5H39M8 524.5H39M8 549.5H39M8 574.5H39M8 599.5H39M8 624.5H39M8 649.5H39M8 674.5H39M8 699.5H39M8 724.5H39M8 749.5H39M8 774.5H39M8 799.5H39M8 824.5H39M8 849.5H39M8 874.5H39M8 899.5H39M8 924.5H39M39.5 329V348M8 348.5H39" stroke="#dadada" stroke-width="1" fill="none"/><path d="M39 348.5H1889M39.5 348V927" stroke="#a6a6a6" stroke-width="1" fill="none"/><path d="M547 348H674" stroke="#107c41" stroke-width="2" fill="none"/><path d="M39 574V600" stroke="#107c41" stroke-width="2" fill="none"/></svg>
<div class="t k" style="left:40px;top:326.00px;width:127px;text-align:center;font-size:21px;color:#444">A</div>
<div class="t k" style="left:167px;top:326.00px;width:127px;text-align:center;font-size:21px;color:#444">B</div>
<div class="t k" style="left:294px;top:326.00px;width:127px;text-align:center;font-size:21px;color:#444">C</div>
<div class="t k" style="left:421px;top:326.00px;width:127px;text-align:center;font-size:21px;color:#444">D</div>
<div class="t k" style="left:548px;top:326.00px;width:127px;text-align:center;font-size:21px;color:#107c41">E</div>
<div class="t k" style="left:675px;top:326.00px;width:127px;text-align:center;font-size:21px;color:#444">F</div>
<div class="t k" style="left:802px;top:326.00px;width:127px;text-align:center;font-size:21px;color:#444">G</div>
<div class="t k" style="left:929px;top:326.00px;width:127px;text-align:center;font-size:21px;color:#444">H</div>
<div class="t k" style="left:1056px;top:326.00px;width:127px;text-align:center;font-size:21px;color:#444">I</div>
<div class="t k" style="left:1183px;top:326.00px;width:127px;text-align:center;font-size:21px;color:#444">J</div>
<div class="t k" style="left:1310px;top:326.00px;width:127px;text-align:center;font-size:21px;color:#444">K</div>
<div class="t k" style="left:1437px;top:326.00px;width:127px;text-align:center;font-size:21px;color:#444">L</div>
<div class="t k" style="left:1564px;top:326.00px;width:127px;text-align:center;font-size:21px;color:#444">M</div>
<div class="t k" style="left:1691px;top:326.00px;width:127px;text-align:center;font-size:21px;color:#444">N</div>
<div class="t k" style="left:1818px;top:326.00px;width:127px;text-align:center;font-size:21px;color:#444">O</div>
<div class="t k" style="left:1px;top:351.57px;width:38px;text-align:center;font-size:20.5px;letter-spacing:-.3px;color:#444">1</div>
<div class="t k" style="left:1px;top:377.57px;width:38px;text-align:center;font-size:20.5px;letter-spacing:-.3px;color:#444">2</div>
<div class="t k" style="left:1px;top:402.57px;width:38px;text-align:center;font-size:20.5px;letter-spacing:-.3px;color:#444">3</div>
<div class="t k" style="left:1px;top:427.57px;width:38px;text-align:center;font-size:20.5px;letter-spacing:-.3px;color:#444">4</div>
<div class="t k" style="left:1px;top:452.57px;width:38px;text-align:center;font-size:20.5px;letter-spacing:-.3px;color:#444">5</div>
<div class="t k" style="left:1px;top:477.57px;width:38px;text-align:center;font-size:20.5px;letter-spacing:-.3px;color:#444">6</div>
<div class="t k" style="left:1px;top:502.57px;width:38px;text-align:center;font-size:20.5px;letter-spacing:-.3px;color:#444">7</div>
<div class="t k" style="left:1px;top:527.57px;width:38px;text-align:center;font-size:20.5px;letter-spacing:-.3px;color:#444">8</div>
<div class="t k" style="left:1px;top:552.57px;width:38px;text-align:center;font-size:20.5px;letter-spacing:-.3px;color:#444">9</div>
<div class="t k" style="left:1px;top:577.57px;width:38px;text-align:center;font-size:20.5px;letter-spacing:-.3px;color:#107c41">10</div>
<div class="t k" style="left:1px;top:602.57px;width:38px;text-align:center;font-size:20.5px;letter-spacing:-.3px;color:#444">11</div>
<div class="t k" style="left:1px;top:627.57px;width:38px;text-align:center;font-size:20.5px;letter-spacing:-.3px;color:#444">12</div>
<div class="t k" style="left:1px;top:652.57px;width:38px;text-align:center;font-size:20.5px;letter-spacing:-.3px;color:#444">13</div>
<div class="t k" style="left:1px;top:677.57px;width:38px;text-align:center;font-size:20.5px;letter-spacing:-.3px;color:#444">14</div>
<div class="t k" style="left:1px;top:702.57px;width:38px;text-align:center;font-size:20.5px;letter-spacing:-.3px;color:#444">15</div>
<div class="t k" style="left:1px;top:727.57px;width:38px;text-align:center;font-size:20.5px;letter-spacing:-.3px;color:#444">16</div>
<div class="t k" style="left:1px;top:752.57px;width:38px;text-align:center;font-size:20.5px;letter-spacing:-.3px;color:#444">17</div>
<div class="t k" style="left:1px;top:777.57px;width:38px;text-align:center;font-size:20.5px;letter-spacing:-.3px;color:#444">18</div>
<div class="t k" style="left:1px;top:802.57px;width:38px;text-align:center;font-size:20.5px;letter-spacing:-.3px;color:#444">19</div>
<div class="t k" style="left:1px;top:827.57px;width:38px;text-align:center;font-size:20.5px;letter-spacing:-.3px;color:#444">20</div>
<div class="t k" style="left:1px;top:852.57px;width:38px;text-align:center;font-size:20.5px;letter-spacing:-.3px;color:#444">21</div>
<div class="t k" style="left:1px;top:877.57px;width:38px;text-align:center;font-size:20.5px;letter-spacing:-.3px;color:#444">22</div>
<div class="t k" style="left:1px;top:902.57px;width:38px;text-align:center;font-size:20.5px;letter-spacing:-.3px;color:#444">23</div>
<div class="t c" style="left:42.5px;top:351.57px;font-weight:700;letter-spacing:-.3px;-webkit-text-stroke:.15px #000">S.NO</div>
<div class="t c" style="left:169.5px;top:351.57px;font-weight:700;letter-spacing:-.3px;-webkit-text-stroke:.15px #000">First Name</div>
<div class="t c" style="left:296.5px;top:351.57px;font-weight:700;letter-spacing:-.3px;-webkit-text-stroke:.15px #000">Last Name</div>
<div class="t c" style="left:423.5px;top:351.57px;font-weight:700;letter-spacing:-.3px;-webkit-text-stroke:.15px #000">Gender</div>
<div class="t c" style="left:550.5px;top:351.57px;font-weight:700;letter-spacing:-.3px;-webkit-text-stroke:.15px #000">Country</div>
<div class="t c" style="left:677.5px;top:351.57px;font-weight:700;letter-spacing:-.3px;-webkit-text-stroke:.15px #000">Age</div>
<div class="t c" style="left:804.5px;top:351.57px;font-weight:700;letter-spacing:-.3px;-webkit-text-stroke:.15px #000">Date</div>
<div class="t c" style="left:931.5px;top:351.57px;font-weight:700;letter-spacing:-.3px;-webkit-text-stroke:.15px #000">Id</div>
<div class="t c" style="left:39px;top:377.57px;width:123.6px;text-align:right">1</div>
<div class="t c" style="left:169.5px;top:377.57px">Dulce</div>
<div class="t c" style="left:296.5px;top:377.57px">Abril</div>
<div class="t c" style="left:423.5px;top:377.57px">Female</div>
<div class="t c" style="left:550.5px;top:377.57px">United States</div>
<div class="t c" style="left:674px;top:377.57px;width:123.6px;text-align:right">32</div>
<div class="t c" style="left:804.5px;top:377.57px">15/10/2017</div>
<div class="t c" style="left:928px;top:377.57px;width:123.6px;text-align:right">1562</div>
<div class="t c" style="left:39px;top:402.57px;width:123.6px;text-align:right">2</div>
<div class="t c" style="left:169.5px;top:402.57px">Mara</div>
<div class="t c" style="left:296.5px;top:402.57px">Hashimoto</div>
<div class="t c" style="left:423.5px;top:402.57px">Female</div>
<div class="t c" style="left:550.5px;top:402.57px">Great Britain</div>
<div class="t c" style="left:674px;top:402.57px;width:123.6px;text-align:right">25</div>
<div class="t c" style="left:804.5px;top:402.57px">16/08/2016</div>
<div class="t c" style="left:928px;top:402.57px;width:123.6px;text-align:right">1582</div>
<div class="t c" style="left:39px;top:427.57px;width:123.6px;text-align:right">3</div>
<div class="t c" style="left:169.5px;top:427.57px">Philip</div>
<div class="t c" style="left:296.5px;top:427.57px">Gent</div>
<div class="t c" style="left:423.5px;top:427.57px">Male</div>
<div class="t c" style="left:550.5px;top:427.57px">France</div>
<div class="t c" style="left:674px;top:427.57px;width:123.6px;text-align:right">36</div>
<div class="t c" style="left:804.5px;top:427.57px">21/05/2015</div>
<div class="t c" style="left:928px;top:427.57px;width:123.6px;text-align:right">2587</div>
<div class="t c" style="left:39px;top:452.57px;width:123.6px;text-align:right">4</div>
<div class="t c" style="left:169.5px;top:452.57px">Kathleen</div>
<div class="t c" style="left:296.5px;top:452.57px">Hanner</div>
<div class="t c" style="left:423.5px;top:452.57px">Female</div>
<div class="t c" style="left:550.5px;top:452.57px">United States</div>
<div class="t c" style="left:674px;top:452.57px;width:123.6px;text-align:right">25</div>
<div class="t c" style="left:804.5px;top:452.57px">15/10/2017</div>
<div class="t c" style="left:928px;top:452.57px;width:123.6px;text-align:right">3549</div>
<div class="t c" style="left:39px;top:477.57px;width:123.6px;text-align:right">5</div>
<div class="t c" style="left:169.5px;top:477.57px">Nereida</div>
<div class="t c" style="left:296.5px;top:477.57px">Magwood</div>
<div class="t c" style="left:423.5px;top:477.57px">Female</div>
<div class="t c" style="left:550.5px;top:477.57px">United States</div>
<div class="t c" style="left:674px;top:477.57px;width:123.6px;text-align:right">58</div>
<div class="t c" style="left:804.5px;top:477.57px">16/08/2016</div>
<div class="t c" style="left:928px;top:477.57px;width:123.6px;text-align:right">2468</div>
<div class="t c" style="left:39px;top:502.57px;width:123.6px;text-align:right">6</div>
<div class="t c" style="left:169.5px;top:502.57px">Gaston</div>
<div class="t c" style="left:296.5px;top:502.57px">Brumm</div>
<div class="t c" style="left:423.5px;top:502.57px">Male</div>
<div class="t c" style="left:550.5px;top:502.57px">United States</div>
<div class="t c" style="left:674px;top:502.57px;width:123.6px;text-align:right">24</div>
<div class="t c" style="left:804.5px;top:502.57px">21/05/2015</div>
<div class="t c" style="left:928px;top:502.57px;width:123.6px;text-align:right">2554</div>
<div class="t c" style="left:39px;top:527.57px;width:123.6px;text-align:right">7</div>
<div class="t c" style="left:169.5px;top:527.57px">Etta</div>
<div class="t c" style="left:296.5px;top:527.57px">Hurn</div>
<div class="t c" style="left:423.5px;top:527.57px">Female</div>
<div class="t c" style="left:550.5px;top:527.57px">Great Britain</div>
<div class="t c" style="left:674px;top:527.57px;width:123.6px;text-align:right">56</div>
<div class="t c" style="left:804.5px;top:527.57px">15/10/2017</div>
<div class="t c" style="left:928px;top:527.57px;width:123.6px;text-align:right">3598</div>
<div class="t c" style="left:39px;top:552.57px;width:123.6px;text-align:right">8</div>
<div class="t c" style="left:169.5px;top:552.57px">Earlean</div>
<div class="t c" style="left:296.5px;top:552.57px">Melgar</div>
<div class="t c" style="left:423.5px;top:552.57px">Female</div>
<div class="t c" style="left:550.5px;top:552.57px">United States</div>
<div class="t c" style="left:674px;top:552.57px;width:123.6px;text-align:right">27</div>
<div class="t c" style="left:804.5px;top:552.57px">16/08/2016</div>
<div class="t c" style="left:928px;top:552.57px;width:123.6px;text-align:right">2456</div>
<div class="t c" style="left:39px;top:577.57px;width:123.6px;text-align:right">9</div>
<div class="t c" style="left:169.5px;top:577.57px">Vincenza</div>
<div class="t c" style="left:296.5px;top:577.57px">Weiland</div>
<div class="t c" style="left:423.5px;top:577.57px">Female</div>
<div class="t c" style="left:550.5px;top:577.57px">United States</div>
<div class="t c" style="left:674px;top:577.57px;width:123.6px;text-align:right">40</div>
<div class="t c" style="left:804.5px;top:577.57px">21/05/2015</div>
<div class="t c" style="left:928px;top:577.57px;width:123.6px;text-align:right">6548</div>
<div class="abs" style="left:546px;top:573px;width:130px;height:28px;border:2px solid #217346"></div>
<div class="abs" style="left:670px;top:595px;width:8px;height:8px;background:#fff"></div>
<div class="abs" style="left:671px;top:596px;width:6px;height:6px;background:#217346"></div>

<!-- ================= SCROLLBARS ================= -->
<div class="abs" style="left:1892.500px;top:324px;width:24.500px;height:606px;background:#f5f6f7;border-radius:12px"></div>
<svg style="left:1898px;top:332px" width="14" height="10" viewBox="0 0 14 10"><path d="M7 .8L13.300 9.600H.7z" fill="#6e6e6e" stroke="#6e6e6e" stroke-width="1" stroke-linejoin="round"/></svg>
<div class="abs" style="left:1899px;top:350px;width:12px;height:530.500px;background:#6e6e6e;border-radius:6px"></div>
<svg style="left:1898px;top:912px" width="14" height="10" viewBox="0 0 14 10"><path d="M7 9.200L13.300.400H.7z" fill="#6e6e6e" stroke="#6e6e6e" stroke-width="1" stroke-linejoin="round"/></svg>

<!-- ================= SHEET TABS ================= -->
<div class="abs" style="left:0;top:927px;width:1889px;height:1px;background:#d9d9d9"></div>
<div class="abs" style="left:158px;top:927px;width:102px;height:10px;background:#fff"></div>
<div class="abs" style="left:0;top:928px;width:165.800px;height:47px;background:#e6e8f0;border-radius:0 6px 0 0"></div>
<div class="abs" style="left:252.200px;top:928px;width:1636.800px;height:47px;background:linear-gradient(to right,#e6e8f0 0,#e6e8f0 35%,#e9ecf0 80%);border-radius:6px 0 0 0"></div>
<div class="abs" style="left:165.800px;top:927px;width:86.400px;height:42.200px;background:#fff;border-radius:0 0 6px 6px"></div>
<svg style="left:35px;top:942px" width="10" height="16" viewBox="0 0 10 16"><path d="M8.700.800L1.200 7.800l7.500 7" fill="none" stroke="#a0a0a0" stroke-width="1.600"/></svg>
<svg style="left:84px;top:942px" width="10" height="16" viewBox="0 0 10 16"><path d="M1.300.800l7.500 7-7.500 7" fill="none" stroke="#a0a0a0" stroke-width="1.600"/></svg>
<span class="t semi" style="left:177.70px;top:938px;font-size:20px;letter-spacing:-0.200px;color:#1a1a1a">Sheet1</span>
<div class="abs" style="left:178px;top:962px;width:62px;height:3px;background:#107c41"></div>
<div class="sep" style="left:258px;top:937.500px;height:27px;background:#c9ccd1"></div>
<svg style="left:322px;top:941px" width="17" height="17" viewBox="0 0 17 17"><path d="M8.500 0v17M0 8.500h17" stroke="#3f3f3f" stroke-width="1.600"/></svg>
<svg style="left:409px;top:944px" width="4" height="15" viewBox="0 0 4 15"><rect x=".3" y=".2" width="3.200" height="3.200" fill="#3f3f3f"/><rect x=".3" y="5.800" width="3.200" height="3.200" fill="#3f3f3f"/><rect x=".3" y="11.400" width="3.200" height="3.200" fill="#3f3f3f"/></svg>
<!-- h scrollbar -->
<div class="abs" style="left:435px;top:937px;width:1457px;height:26px;background:#f5f6f7;border-radius:13px"></div>
<svg style="left:443px;top:943px" width="10" height="14" viewBox="0 0 10 14"><path d="M.8 7L9.500.700v12.600z" fill="#6e6e6e" stroke="#6e6e6e" stroke-width="1" stroke-linejoin="round"/></svg>
<div class="abs" style="left:461px;top:944px;width:1385px;height:12px;background:#6e6e6e;border-radius:6px"></div>
<svg style="left:1874px;top:943px" width="10" height="14" viewBox="0 0 10 14"><path d="M9.200 7L.500.700v12.600z" fill="#6e6e6e" stroke="#6e6e6e" stroke-width="1" stroke-linejoin="round"/></svg>

<!-- ================= WATERMARK ================= -->
<span class="t" style="left:1498.40px;top:899px;font-size:29px;letter-spacing:0.480px;color:rgba(138,138,138,.6)">Activate Windows</span>
<span class="t" style="left:1497.40px;top:936px;font-size:21px;letter-spacing:0.388px;color:rgba(185,185,185,.78)">Go to Settings to activate Windows.</span>

<!-- ================= STATUS BAR ================= -->
<div class="abs" style="left:0;top:975px;width:1920px;height:33px;background:#f5f5f5"></div>
<span class="t" style="left:15.90px;top:984px;font-size:15px;letter-spacing:-0.200px;color:#3a3a3a">Ready</span>
<svg style="left:87px;top:981px" width="23" height="22" viewBox="0 0 23 22">
  <circle cx="9.400" cy="3.100" r="2" fill="none" stroke="#2f2f2f" stroke-width="1.300"/>
  <path d="M1.300 4.600c-.6 1 .2 1.700 1.200 2.200 1.400.8 2.800 1.300 4.300 1.600v4.800c0 1.800-.7 3.300-2.300 4.700-1.100 1 .2 2.500 1.400 1.600 1.200-.9 2-2 2.600-3.400" fill="none" stroke="#2f2f2f" stroke-width="1.300" stroke-linecap="round" stroke-linejoin="round"/>
  <path d="M17.600 4.600c.6 1-.2 1.700-1.200 2.200-1.400.8-2.800 1.300-4.300 1.600v4.200" fill="none" stroke="#2f2f2f" stroke-width="1.300" stroke-linecap="round" stroke-linejoin="round"/>
  <path d="M10.600 17.500l3.200 3.200 7.800-7.900" fill="none" stroke="#2f2f2f" stroke-width="1.500" stroke-linecap="round" stroke-linejoin="round"/>
</svg>
<span class="t" style="left:114.40px;top:984px;font-size:15px;letter-spacing:0.175px;color:#3a3a3a">Accessibility: Good to go</span>
<!-- view buttons -->
<div class="abs" style="left:1475px;top:976px;width:60px;height:32px;background:#dedede"></div>
<svg style="left:1494px;top:981px" width="21" height="20" viewBox="0 0 21 20">
  <rect x=".9" y=".9" width="19" height="18.200" fill="none" stroke="#2d2d2d" stroke-width="2"/>
  <path d="M7.200 1v18M13.600 1v18M1 7h19M1 13h19" stroke="#2d2d2d" stroke-width="1.900"/>
</svg>
<svg style="left:1554px;top:981px" width="22" height="20" viewBox="0 0 22 20">
  <rect x=".9" y=".9" width="20" height="18.200" fill="none" stroke="#2d2d2d" stroke-width="2"/>
  <rect x="5.300" y="4.300" width="11.200" height="11.400" fill="none" stroke="#2d2d2d" stroke-width="1.700"/>
  <path d="M7.500 7.500h7M7.500 10h7M7.500 12.500h7" stroke="#2d2d2d" stroke-width="1.400"/>
</svg>
<svg style="left:1614px;top:981px" width="22" height="20" viewBox="0 0 22 20">
  <rect x=".9" y=".9" width="20" height="18.200" fill="none" stroke="#2d2d2d" stroke-width="2"/>
  <path d="M7 1v10M1 11h12.500V1" stroke="#2d2d2d" stroke-width="1.800" fill="none"/>
</svg>
<svg style="left:1663px;top:990px" width="12" height="3" viewBox="0 0 12 3"><path d="M0 1.500h11.500" stroke="#444" stroke-width="1.500"/></svg>
<div class="abs" style="left:1683px;top:990.500px;width:148px;height:2px;background:#5f5f5f"></div>
<div class="abs" style="left:1753px;top:983px;width:8px;height:17px;background:#666;border-radius:1px"></div>
<svg style="left:1839px;top:986px" width="12" height="12" viewBox="0 0 12 12"><path d="M6 0v12M0 6h12" stroke="#444" stroke-width="1.500"/></svg>
<span class="t" style="left:1869.90px;top:984px;font-size:15.5px;letter-spacing:-0.267px;color:#3a3a3a">100%</span>
</body>
</html>
